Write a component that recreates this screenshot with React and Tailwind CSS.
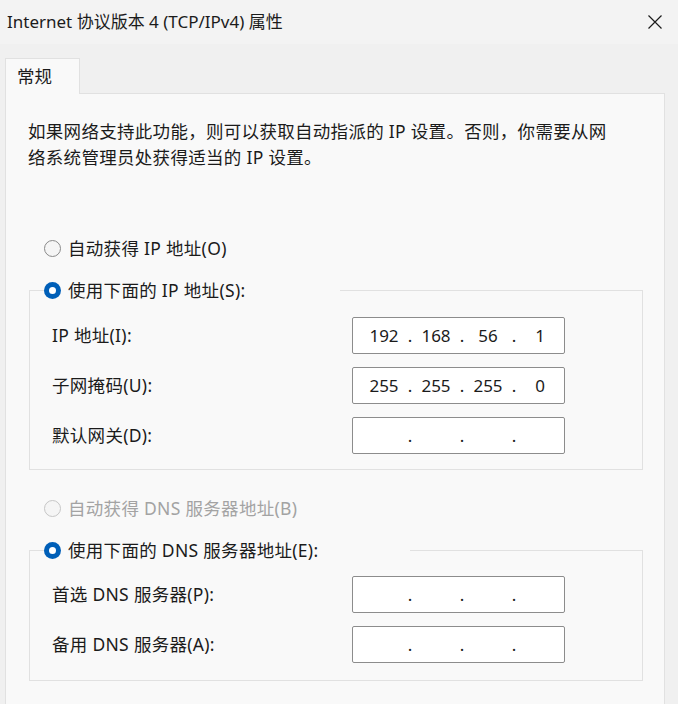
import React from 'react';

const Radio = ({ checked, disabled, label }) => (
  <div className="flex items-center h-[26px]">
    {checked ? (
      <div className="w-[17px] h-[17px] rounded-full bg-[#005fb8] flex items-center justify-center">
        <div className="w-[7px] h-[7px] rounded-full bg-white" />
      </div>
    ) : (
      <div
        className={`w-[17px] h-[17px] rounded-full border bg-[#f5f5f5] ${
          disabled ? 'border-[#c6c6c6]' : 'border-[#8a8a8a]'
        }`}
      />
    )}
    <span className={`ml-[7px] whitespace-nowrap ${disabled ? 'text-[#a3a3a3]' : 'text-[#1b1b1b]'}`}>
      {label}
    </span>
  </div>
);

const IpBox = ({ parts }) => (
  <div className="w-[213px] h-[37px] bg-white border border-[#8c8c8c] rounded-[2px] flex items-center pl-[12px] text-[17px] tracking-normal text-[#1b1b1b]">
    {parts.map((p, i) => (
      <React.Fragment key={i}>
        <span className="w-[38px] text-center">{p}</span>
        {i < 3 && <span className="w-[14px] text-center">.</span>}
      </React.Fragment>
    ))}
  </div>
);

const Field = ({ label, parts }) => (
  <div className="flex items-center h-[37px]">
    <span className="w-[300px] whitespace-nowrap">{label}</span>
    <IpBox parts={parts} />
  </div>
);

const GroupBox = ({ legend, legendWidth, children, className }) => (
  <div className={`ml-[23px] w-[614px] border border-[#e1e1e1] ${className}`}>
    <div className={`-mt-[14px] ml-[14px] bg-[#f9f9f9] ${legendWidth}`}>{legend}</div>
    {children}
  </div>
);

export default function App() {
  const empty = ['', '', '', ''];
  return (
    <div className="w-[678px] h-[704px] overflow-hidden bg-[#f0f0f0] text-[17.5px] text-[#1b1b1b] font-['Noto_Sans','Noto_Sans_CJK_SC',sans-serif]">
      {/* Title bar */}
      <div className="h-[44px] bg-[#f3f3f3] flex items-center justify-between pl-[7px] pr-[16px]">
        <span className="text-[17px] whitespace-nowrap">Internet 协议版本 4 (TCP/IPv4) 属性</span>
        <svg width="14" height="14" viewBox="0 0 14 14">
          <path d="M0.5 0.5 L13.5 13.5 M13.5 0.5 L0.5 13.5" stroke="#1b1b1b" strokeWidth="1.2" />
        </svg>
      </div>

      {/* Tab */}
      <div className="pt-[14px]">
        <div className="relative z-10 ml-[5px] w-[75px] h-[36px] border border-b-0 border-[#e1e1e1] bg-[#f9f9f9] flex items-center pl-[11px] -mb-px">
          常规
        </div>

        {/* Panel */}
        <div className="ml-[5px] w-[660px] h-[620px] border border-[#e1e1e1] bg-[#f9f9f9] pt-[24px] tracking-[0.3px]">
          <p className="pl-[22px] leading-[26px]">
            如果网络支持此功能，则可以获取自动指派的 IP 设置。否则，你需要从网
            <br />
            络系统管理员处获得适当的 IP 设置。
          </p>

          <div className="ml-[38px] mt-[65px]">
            <Radio label="自动获得 IP 地址(O)" />
          </div>

          <GroupBox
            className="mt-[29px] pb-[15px]"
            legendWidth="w-[296px]"
            legend={<Radio checked label="使用下面的 IP 地址(S):" />}
          >
            <div className="pl-[22px] mt-[14px] flex flex-col gap-[13px]">
              <Field label="IP 地址(I):" parts={['192', '168', '56', '1']} />
              <Field label="子网掩码(U):" parts={['255', '255', '255', '0']} />
              <Field label="默认网关(D):" parts={empty} />
            </div>
          </GroupBox>

          <div className="ml-[38px] mt-[25px]">
            <Radio disabled label="自动获得 DNS 服务器地址(B)" />
          </div>

          <GroupBox
            className="mt-[29px] pb-[17px]"
            legendWidth="w-[366px]"
            legend={<Radio checked label="使用下面的 DNS 服务器地址(E):" />}
          >
            <div className="pl-[22px] mt-[13px] flex flex-col gap-[13px]">
              <Field label="首选 DNS 服务器(P):" parts={empty} />
              <Field label="备用 DNS 服务器(A):" parts={empty} />
            </div>
          </GroupBox>
        </div>
      </div>
    </div>
  );
}
